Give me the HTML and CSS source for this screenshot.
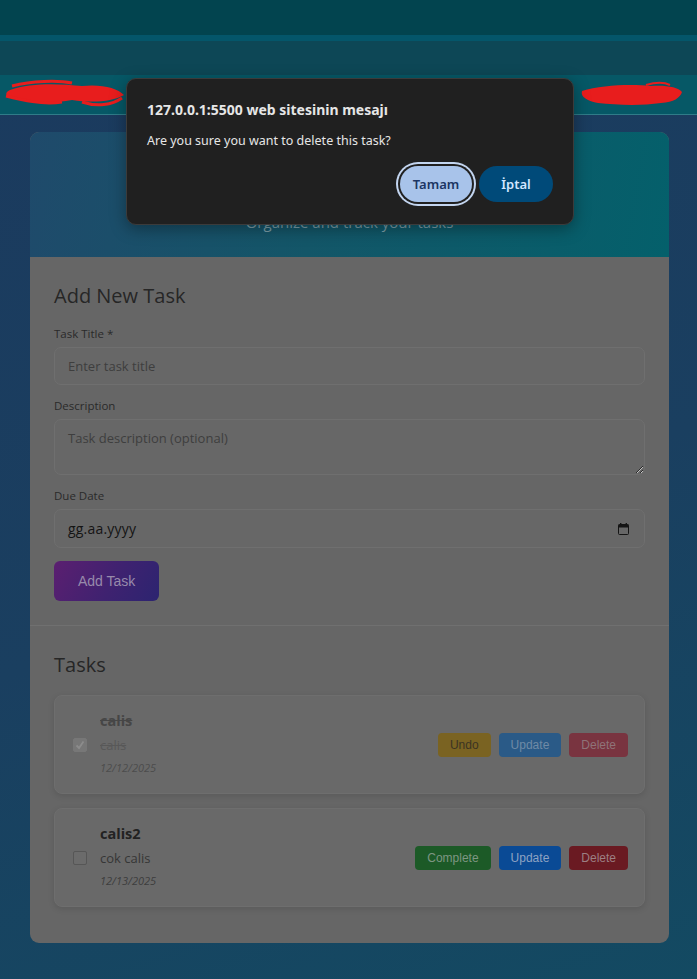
FILE: index.html
```html
<!DOCTYPE html>
<html lang="tr">
<head>
<meta charset="utf-8">
<title>Task Manager</title>
<link rel="stylesheet" href="styles.css">
</head>
<body>
<div class="chrome-top"></div>
<div class="chrome-stripe"></div>
<div class="chrome-bar"></div>
<nav class="navbar"></nav>

<main class="main">
  <div class="app">
    <header class="app-header">
      <p class="app-subtitle">Organize and track your tasks</p>
    </header>

    <section class="form-section">
      <h2 class="section-title">Add New Task</h2>
      <div class="form-group">
        <label class="label">Task Title *</label>
        <input class="input" type="text" placeholder="Enter task title">
      </div>
      <div class="form-group">
        <label class="label">Description</label>
        <textarea class="input textarea" placeholder="Task description (optional)"></textarea>
      </div>
      <div class="form-group">
        <label class="label">Due Date</label>
        <div class="input date-input">
          <span class="date-text">gg.aa.yyyy</span>
          <svg class="cal-icon" width="11" height="12" viewBox="0 0 11 12"><rect x="0.5" y="1.5" width="10" height="10" rx="1" fill="none" stroke="#151515" stroke-width="1"/><rect x="0.5" y="1.5" width="10" height="3" fill="#151515"/><rect x="2" y="0" width="1.4" height="2.5" fill="#151515"/><rect x="7.6" y="0" width="1.4" height="2.5" fill="#151515"/></svg>
        </div>
      </div>
      <button class="btn-add">Add Task</button>
    </section>

    <section class="tasks-section">
      <h2 class="section-title tasks-title">Tasks</h2>
      <div class="task-list">
        <div class="task done">
          <span class="check checked"><svg width="12" height="12" viewBox="0 0 12 12"><path d="M2.5 6.5 L5 9 L9.5 2.5" fill="none" stroke="#8c8c8c" stroke-width="1.8"/></svg></span>
          <div class="task-body">
            <div class="task-title">calis</div>
            <div class="task-desc">calis</div>
            <div class="task-date">12/12/2025</div>
          </div>
          <div class="task-actions">
            <button class="btn btn-undo">Undo</button>
            <button class="btn btn-update-f">Update</button>
            <button class="btn btn-delete-f">Delete</button>
          </div>
        </div>
        <div class="task">
          <span class="check"></span>
          <div class="task-body">
            <div class="task-title">calis2</div>
            <div class="task-desc">cok calis</div>
            <div class="task-date">12/13/2025</div>
          </div>
          <div class="task-actions">
            <button class="btn btn-complete">Complete</button>
            <button class="btn btn-update">Update</button>
            <button class="btn btn-delete">Delete</button>
          </div>
        </div>
      </div>
    </section>
  </div>
</main>

<svg class="scribble scribble-left" width="130" height="32" viewBox="0 0 130 32">
  <path d="M8 12 C30 4 60 6 80 8 C100 6 115 10 122 17 C110 24 90 25 70 22 C50 26 25 25 6 19 C3 16 4 14 8 12 Z" fill="#e81d1d"/>
  <path d="M10 8 C30 3 55 2 70 5 M4 18 C20 22 40 27 60 24 M80 24 C95 29 110 27 120 20" fill="none" stroke="#e81d1d" stroke-width="3"/>
</svg>
<svg class="scribble scribble-right" width="112" height="28" viewBox="0 0 112 28">
  <path d="M6 10 C25 4 55 3 75 5 C90 4 102 6 106 11 C104 17 98 21 85 22 C65 25 40 24 22 22 C12 20 4 16 6 10 Z" fill="#e81d1d"/>
  <path d="M70 4 C80 1 88 1 94 4" fill="none" stroke="#e81d1d" stroke-width="2"/>
</svg>

<div class="dialog" role="dialog">
  <div class="dialog-title">127.0.0.1:5500 web sitesinin mesajı</div>
  <div class="dialog-msg">Are you sure you want to delete this task?</div>
  <div class="dialog-actions">
    <button class="dbtn dbtn-ok">Tamam</button>
    <button class="dbtn dbtn-cancel">İptal</button>
  </div>
</div>
</body>
</html>
```
FILE: styles.css
```css
* { box-sizing: border-box; }
html, body { margin: 0; padding: 0; }
body {
  width: 697px;
  min-height: 979px;
  font-family: "Open Sans", "Noto Sans", sans-serif;
  background: linear-gradient(160deg, #1b3a5e 0%, #1a3f60 55%, #134a62 100%);
  position: relative;
  overflow: hidden;
}
.chrome-top { height: 35px; background: #02444f; }
.chrome-stripe { height: 6px; background: #04566a; }
.chrome-bar { height: 34px; background: #0d4756; }
.navbar { height: 40px; background: #065866; border-bottom: 1px solid #2f7c88; }

.main { padding: 17px 28px 37px 30px; }
.app {
  background: #666666;
  border-radius: 9px;
  overflow: hidden;
}
.app-header {
  height: 125px;
  background: linear-gradient(100deg, #1f4a6b 0%, #135668 45%, #04606b 100%);
  text-align: center;
  padding-top: 80px;
}
.app-subtitle { margin: 0; font-size: 15px; color: #7b9ea8; line-height: 20px; }

.form-section {
  padding: 24px 24px 24px;
  border-bottom: 1px solid #707070;
}
.section-title {
  margin: 0 0 15px;
  font-size: 20px;
  font-weight: 500;
  line-height: 30px;
  color: #262626;
}
.form-group { margin-bottom: 13px; }
.label {
  display: block;
  font-size: 11.5px;
  font-weight: 500;
  line-height: 16px;
  color: #2a2a2a;
  margin-bottom: 5px;
}
.input {
  display: block;
  width: 100%;
  height: 38px;
  padding: 0 13px;
  background: #676767;
  border: 1px solid #6f6f6f;
  border-radius: 7px;
  font-family: "Open Sans", "Noto Sans", sans-serif;
  font-size: 13px;
  color: #222;
  outline: none;
}
.input::placeholder { color: #3e3e3e; }
.textarea { height: 56px; padding: 8px 13px; resize: vertical; line-height: 20px; }
.date-input {
  height: 39px;
  display: flex;
  align-items: center;
  justify-content: space-between;
  padding: 0 15px 0 13px;
}
.date-text { font-size: 14px; color: #141414; letter-spacing: 0.2px; }
.cal-icon { display: block; }

.btn-add {
  display: block;
  height: 40px;
  padding: 0 24px;
  border: none;
  border-radius: 6px;
  background: linear-gradient(120deg, #5b1f70 0%, #3f2270 55%, #2c2470 100%);
  color: #978aab;
  font-family: "Liberation Sans", Arial, sans-serif;
  font-size: 14px;
}

.tasks-section { padding: 24px 24px 36px; }
.tasks-title { margin-bottom: 15px; }
.task-list { display: flex; flex-direction: column; gap: 14px; }
.task {
  display: flex;
  align-items: center;
  min-height: 99px;
  padding: 12px 16px 12px 18px;
  background: #696969;
  border: 1px solid #6e6e6e;
  border-radius: 8px;
  box-shadow: 0 2px 6px rgba(0,0,0,0.12);
}
.check {
  width: 14px;
  height: 14px;
  border: 1px solid #565656;
  border-radius: 2px;
  background: #6b6b6b;
  flex: none;
  margin-right: 13px;
  display: flex;
  align-items: center;
  justify-content: center;
}
.check.checked { background: #777; border-color: #777; }
.task-body { flex: 1; }
.task-title { font-size: 14.5px; font-weight: 700; color: #222; line-height: 22px; }
.task-desc { font-size: 13px; color: #363636; line-height: 22px; margin-top: 2px; }
.task-date { font-size: 11px; font-style: italic; color: #3d3d3d; line-height: 22px; margin-top: 1px; }
.task.done .task-title { color: #464646; text-decoration: line-through; }
.task.done .task-desc { color: #585858; text-decoration: line-through; }
.task.done .task-date { color: #4c4c4c; }

.task-actions { display: flex; gap: 8px; }
.btn {
  height: 24px;
  padding: 0 12px;
  border: none;
  border-radius: 4px;
  font-family: "Liberation Sans", Arial, sans-serif;
  font-size: 12px;
  line-height: 24px;
}
.btn-undo { background: #7a6322; color: #3a3322; }
.btn-update-f { background: #2a5a87; color: #6f8aa6; }
.btn-delete-f { background: #793440; color: #8f7378; }
.btn-complete { background: #1c5a27; color: #7e9683; }
.btn-update { background: #0a4a95; color: #8ea3c3; }
.btn-delete { background: #6a1a22; color: #9c7f83; }

.scribble { position: absolute; }
.scribble-left { left: 2px; top: 78px; }
.scribble-right { left: 576px; top: 81px; }

.dialog {
  position: absolute;
  left: 126px;
  top: 78px;
  width: 448px;
  height: 147px;
  background: #202020;
  border: 1px solid #3b3b3b;
  border-radius: 10px;
  box-shadow: 0 4px 16px rgba(0,0,0,0.35);
  padding: 21px 20px 20px;
  font-family: "Noto Sans", "Open Sans", sans-serif;
  color: #e6e6e6;
}
.dialog-title { font-size: 14px; font-weight: 700; line-height: 20px; }
.dialog-msg { font-size: 12.5px; line-height: 18px; margin-top: 12px; }
.dialog-actions {
  display: flex;
  justify-content: flex-end;
  gap: 7px;
  margin-top: 16px;
}
.dbtn {
  height: 36px;
  border: none;
  border-radius: 18px;
  font-family: "Noto Sans", "Open Sans", sans-serif;
  font-size: 13px;
  font-weight: 600;
}
.dbtn-ok {
  width: 72px;
  background: #a8c3ea;
  color: #1b3563;
  box-shadow: 0 0 0 2px #202020, 0 0 0 4px #c3d5f0;
}
.dbtn-cancel {
  width: 74px;
  background: #004a79;
  color: #d2e6ff;
}
```
